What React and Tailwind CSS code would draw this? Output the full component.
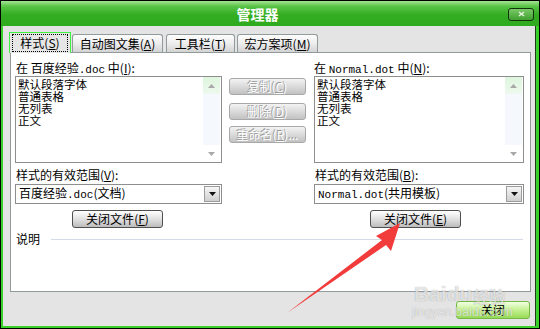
import React from "react";
import clsx from "clsx";

const Key = ({ k }) => (
  <span>
    (<span className="underline underline-offset-1">{k}</span>)
  </span>
);

const Mono = ({ children }) => (
  <span className="font-['Liberation_Mono',monospace] text-[11px]">{children}</span>
);

const Tab = ({ children, active, className }) =>
  active ? (
    <div className={clsx("relative z-10 -mb-px flex h-[21px] border border-b-0 border-[#3ff03f] bg-[#e6e6e6] px-[2px] py-px", className)}>
      <div className="flex flex-1 items-center justify-center border border-dotted border-black leading-none">{children}</div>
    </div>
  ) : (
    <div
      className={clsx(
        "flex h-[18px] items-center justify-center rounded-t-[3px] border border-b-0 border-[#919b9c] bg-[linear-gradient(#fdfdfd,#ededed_50%,#d3d3d3)] leading-none",
        className
      )}
    >
      {children}
    </div>
  );

const Btn = ({ children, disabled, className }) => (
  <div
    className={clsx(
      "flex items-center justify-center rounded-[3px] border leading-none",
      disabled
        ? "border-[#a8a8a8] bg-[linear-gradient(#f3f3f3,#d8d8d8_55%,#c2c2c2)] text-white [text-shadow:-1px_-1px_0_#9a9a9a]"
        : "border-[#4f4f4f] bg-[linear-gradient(#ffffff,#dedede_55%,#bcbcbc)] text-black",
      className
    )}
  >
    {children}
  </div>
);

const Triangle = ({ down, color = "#a8a8a8", size = 3 }) => (
  <svg width={size * 2 + 1} height={size + 1} viewBox={`0 0 ${size * 2 + 1} ${size + 1}`}>
    <polygon
      points={down ? `0,0 ${size * 2 + 1},0 ${size + 0.5},${size + 1}` : `0,${size + 1} ${size * 2 + 1},${size + 1} ${size + 0.5},0`}
      fill={color}
    />
  </svg>
);

const ListBox = ({ items }) => (
  <div className="mt-px flex h-[87px] border border-[#8e8e8e] bg-white">
    <div className="flex-1 pl-[2px] pt-px text-[11.5px] leading-[12px]">
      {items.map((item) => (
        <div key={item} className="h-[12px]">
          {item}
        </div>
      ))}
    </div>
    <div className="mr-px flex w-[17px] flex-col bg-[#f5f8fd]">
      <div className="flex h-[17px] items-center justify-center bg-[linear-gradient(#ddf5dd,#eef9ee)]">
        <Triangle />
      </div>
      <div className="flex-1" />
      <div className="flex h-[17px] items-center justify-center bg-white">
        <Triangle down />
      </div>
    </div>
  </div>
);

const Combo = ({ children }) => (
  <div className="mt-[2px] flex h-[20px] items-center border border-[#8e8e8e] bg-white">
    <div className="flex-1 pl-[3px] leading-none">{children}</div>
    <div className="mr-px flex h-[16px] w-[16px] items-center justify-center border border-[#9c9c9c] bg-[linear-gradient(#f6f6f6,#cfcfcf)]">
      <Triangle down color="#111" />
    </div>
  </div>
);

const items = ["默认段落字体", "普通表格", "无列表", "正文"];

export default function App() {
  return (
    <div className="relative h-[329px] w-[540px] overflow-hidden bg-black p-px font-['Noto_Sans_CJK_SC',sans-serif] text-[12px] text-black">
      <div className="flex h-full flex-col bg-[#3ad22a] pb-[2px] pl-[2px] pr-[3px]">
        <div className="-ml-[2px] -mr-[3px] flex h-[25px] items-center bg-[linear-gradient(#a4e394,#58c346_22%,#33ad22_55%,#2fab1f)]">
          <div className="flex-1 pl-[6px] text-center text-[14px] font-bold leading-none text-white">管理器</div>
          <div className="mr-[5px] mt-px flex h-[13px] w-[26px] items-center justify-center rounded-[3px] border border-[#15300d] bg-[linear-gradient(#7bc96a,#3f9f2e)]">
            <svg width="7" height="6" viewBox="0 0 7 6">
              <path d="M1 1 L6 5 M6 1 L1 5" stroke="#e8f5e0" strokeWidth="1.4" />
            </svg>
          </div>
        </div>

        <div className="flex flex-1 flex-col border-r border-[#1e3c16] bg-[#e4e4e4]">
          <div className="flex items-end pl-[6px] pt-[6px]">
            <Tab active className="w-[62px]">
              样式<Key k="S" />
            </Tab>
            <Tab className="ml-px w-[91px]">
              自动图文集<Key k="A" />
            </Tab>
            <Tab className="ml-[3px] w-[69px]">
              工具栏<Key k="T" />
            </Tab>
            <Tab className="ml-[2px] w-[81px]">
              宏方案项<Key k="M" />
            </Tab>
          </div>

          <div className="ml-[7px] flex h-[240px] w-[521px] flex-col border border-[#919b9c] bg-white">
            <div className="flex pl-[4px]">
              <div className="flex w-[207px] flex-col">
                <div className="mt-[8px] h-[14px] pl-px leading-[14px]">
                  在 百度经验<Mono>.doc</Mono> 中<Key k="I" />:
                </div>
                <ListBox items={items} />
                <div className="mt-[5px] h-[14px] pl-px leading-[14px]">
                  样式的有效范围<Key k="V" />:
                </div>
                <Combo>
                  百度经验<Mono>.doc</Mono>(文档)
                </Combo>
                <Btn className="ml-[57px] mt-[6px] h-[18px] w-[91px]">
                  关闭文件<Key k="F" />
                </Btn>
              </div>

              <div className="ml-[7px] flex w-[77px] flex-col">
                <Btn disabled className="mt-[25px] h-[17px]">
                  复制<Key k="C" />
                </Btn>
                <Btn disabled className="mt-[8px] h-[17px]">
                  删除<Key k="D" />
                </Btn>
                <Btn disabled className="mt-[6px] h-[17px]">
                  重命名<Key k="R" />...
                </Btn>
              </div>

              <div className="ml-[8px] flex w-[210px] flex-col">
                <div className="mt-[8px] h-[14px] leading-[14px]">
                  在 <Mono>Normal.dot</Mono> 中<Key k="N" />:
                </div>
                <ListBox items={items} />
                <div className="mt-[5px] h-[14px] pl-px leading-[14px]">
                  样式的有效范围<Key k="B" />:
                </div>
                <Combo>
                  <Mono>Normal.dot</Mono>(共用模板)
                </Combo>
                <Btn className="ml-[56px] mt-[6px] h-[18px] w-[91px]">
                  关闭文件<Key k="E" />
                </Btn>
              </div>
            </div>

            <div className="mt-[4px] flex h-[14px] items-center pl-[5px] pr-[7px]">
              <span className="leading-[14px]">说明</span>
              <div className="ml-[11px] h-px flex-1 bg-[#d3dce6]" />
            </div>
          </div>

          <div className="flex justify-end pr-[5px] pt-[9px]">
            <div className="flex h-[18px] w-[74px] items-center justify-center rounded-[3px] border border-[#76b843] bg-[linear-gradient(#f2ffe4,#c4f090_50%,#96dc58)] leading-none">
              关闭
            </div>
          </div>
        </div>
      </div>

      <svg className="pointer-events-none absolute left-[452px] top-[270px]" width="26" height="20" viewBox="0 0 26 20">
        <g fill="none" stroke="rgba(255,255,255,0.8)" strokeWidth="1.6">
          <ellipse cx="6" cy="5" rx="2.5" ry="3.2" />
          <ellipse cx="12" cy="3.5" rx="2.5" ry="3" />
          <ellipse cx="18.5" cy="4.5" rx="2.5" ry="3.2" />
          <ellipse cx="23" cy="9" rx="2" ry="2.6" />
          <path d="M7 17 Q9 9 14 9 Q19 9 20 17 Q14 20 7 17 Z" />
        </g>
      </svg>
      <div className="pointer-events-none absolute left-[414px] top-[283px] flex items-end whitespace-nowrap text-white/70 [text-shadow:0_0_1px_rgba(0,0,0,0.35)]">
        <span className="font-['Liberation_Sans',sans-serif] text-[21px] font-bold leading-none">Baidu</span>
        <span className="ml-px text-[16px] font-bold leading-none">经验</span>
      </div>
      <div className="pointer-events-none absolute left-[412px] top-[306px] whitespace-nowrap font-['Liberation_Sans',sans-serif] text-[12.5px] leading-none text-white/70 [text-shadow:0_0_1px_rgba(0,0,0,0.3)]">
        jingyan.baidu.com
      </div>

      <svg className="pointer-events-none absolute left-0 top-0" width="540" height="329" viewBox="0 0 540 329">
        <polygon points="400,223 376,236 382,240 287,313 386,245 391,251" fill="#f23b3b" />
      </svg>
    </div>
  );
}
